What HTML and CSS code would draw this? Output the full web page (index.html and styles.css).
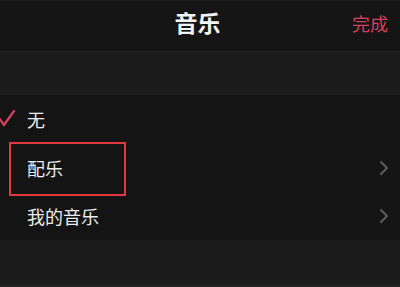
FILE: index.html
```html
<!DOCTYPE html>
<html>
<head>
<meta charset="utf-8">
<link rel="stylesheet" href="styles.css">
</head>
<body>
<div class="screen">
  <header class="nav">
    <span class="title">音乐</span>
    <span class="done">完成</span>
  </header>
  <div class="gap"></div>
  <div class="list">
    <div class="row">
      <svg class="check" width="16" height="18" viewBox="0 0 16 18"><path d="M-1 8 L4 15 L14 1" fill="none" stroke="#d8405c" stroke-width="2.2" stroke-linecap="round" stroke-linejoin="round"/></svg>
      <span class="label">无</span>
    </div>
    <div class="row r2">
      <span class="label">配乐</span>
      <svg class="chev" width="10" height="16" viewBox="0 0 10 16"><path d="M2 2 L8 8 L2 14" fill="none" stroke="#5b5b5b" stroke-width="2.2" stroke-linecap="round" stroke-linejoin="round"/></svg>
    </div>
    <div class="row">
      <span class="label">我的音乐</span>
      <svg class="chev" width="10" height="16" viewBox="0 0 10 16"><path d="M2 2 L8 8 L2 14" fill="none" stroke="#5b5b5b" stroke-width="2.2" stroke-linecap="round" stroke-linejoin="round"/></svg>
    </div>
    <div class="highlight"></div>
  </div>
  <div class="bottom"></div>
</div>
</body>
</html>
```
FILE: styles.css
```css
html, body {
  margin: 0;
  padding: 0;
  background: #1b1b1b;
}
.screen {
  width: 400px;
  height: 287px;
  display: flex;
  flex-direction: column;
  font-family: "Noto Sans CJK SC", "Noto Sans", sans-serif;
  overflow: hidden;
}
.nav {
  height: 52px;
  box-sizing: border-box;
  padding-bottom: 8px;
  background: #151515;
  border-top: 1px solid #202020;
  border-bottom: 1px solid #232323;
  display: flex;
  align-items: center;
  justify-content: center;
  position: relative;
  flex: none;
}
.title {
  color: #f4f4f4;
  font-size: 23px;
  font-weight: 700;
  margin-left: -5px;
}
.done {
  position: absolute;
  right: 12px;
  top: 9px;
  color: #d8405f;
  font-size: 18px;
}
.gap {
  height: 43px;
  background: #1c1c1c;
  flex: none;
}
.list {
  background: #141414;
  position: relative;
  flex: none;
}
.row {
  height: 48.4px;
  display: flex;
  align-items: center;
  padding-left: 27px;
  padding-right: 11px;
  position: relative;
}
.label {
  color: #ececec;
  font-size: 18px;
  flex: 1;
}
.check {
  position: absolute;
  left: 0;
  top: 15px;
}
.chev {
  flex: none;
}
.highlight {
  position: absolute;
  left: 9px;
  top: 47px;
  width: 113px;
  height: 50px;
  border: 2px solid #e03a40;
}
.bottom {
  flex: 1;
  background: #1c1c1c;
  border-bottom: 2px solid #242424;
}
```
